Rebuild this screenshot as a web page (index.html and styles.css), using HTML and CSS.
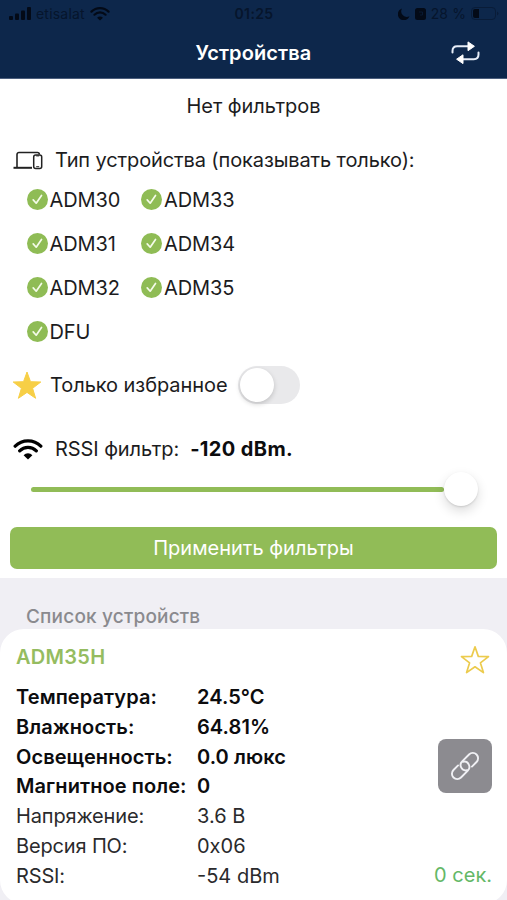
FILE: index.html
```html
<!DOCTYPE html>
<html lang="ru">
<head>
<meta charset="utf-8">
<title>Устройства</title>
<link rel="stylesheet" href="styles.css">
</head>
<body>
<svg class="defs" aria-hidden="true">
  <symbol id="check" viewBox="0 0 21 21"><circle cx="10.500" cy="10.500" r="10.500" fill="#8fbc55"/><path d="M6.200 10.900l3 3.300 5.300-7.800" fill="none" stroke="#f4fbe9" stroke-width="1.700" stroke-linecap="round" stroke-linejoin="round"/></symbol>
  <symbol id="wifi" viewBox="0 0 30 22"><path d="M2.200 8.200a18.200 18.200 0 0 1 25.600 0M6.700 12.800a11.800 11.800 0 0 1 16.600 0" fill="none" stroke="currentColor" stroke-width="3.300" stroke-linecap="round"/><path d="M15 21.500l-4.400-4.300a6.200 6.200 0 0 1 8.800 0z" fill="currentColor"/></symbol>
</svg>
<header class="header">
  <div class="status">
    <div class="carrier">
      <svg width="22" height="13" viewBox="0 0 22 13"><rect y="9" width="4" height="4" rx="1"/><rect x="6" y="6.500" width="4" height="6.500" rx="1"/><rect x="12" y="3.500" width="4" height="9.500" rx="1"/><rect x="18" width="4" height="13" rx="1"/></svg>
      <span class="operator">etisalat</span>
      <svg width="20" height="15"><use href="#wifi"/></svg>
    </div>
    <span class="clock">01:25</span>
    <div class="power">
      <svg width="12" height="12" viewBox="0 0 12 12"><path d="M4 .5A6 6 0 1 0 11.500 8.200 5.600 5.600 0 0 1 4 .5z"/></svg>
      <svg class="lock" width="11" height="12" viewBox="0 0 11 12"><rect width="11" height="12" rx="2.500"/><path d="M4 4h3.500v3H5" fill="none" stroke="#0a1d3a" stroke-width=".8"/></svg>
      <span class="percent">28 %</span>
      <svg width="28" height="13" viewBox="0 0 28 13"><rect x=".5" y=".5" width="24" height="12" rx="3.500" fill="none" stroke="#091c38"/><path d="M4 2h4v9H4a2 2 0 0 1-2-2V4a2 2 0 0 1 2-2z"/><path d="M26 4.500v4q3-2 0-4z" fill="#091c38"/></svg>
    </div>
  </div>
  <div class="navbar">
    <h1 class="title">Устройства</h1>
    <svg class="repeat" width="29" height="24" viewBox="0 0 29 24"><path d="M1.500 11.500V10Q1.500 5.300 6.200 5.300H17M27.500 11.500V13.500Q27.500 18.200 22.800 18.200H12" fill="none" stroke="#e6edf8" stroke-width="2" stroke-linecap="round"/><path d="M17 .9v8.800L23.400 5.300zM12 13.800v8.800L5.600 18.200z" fill="#fff" stroke="#fff" stroke-linejoin="round"/></svg>
  </div>
</header>
<main>
  <section class="filters">
    <p class="summary">Нет фильтров</p>
    <div class="row type-row">
      <svg class="devices" width="30" height="19" viewBox="0 0 30 19"><path d="M4 16V3.500a2 2 0 0 1 2-2H24.500q1.500 0 1.800 1.300" fill="none" stroke="#222" stroke-width="1.600" stroke-linecap="round"/><path d="M.5 16.800h18.500" stroke="#222" stroke-width="2"/><rect x="20.700" y="4" width="8" height="13.600" rx="2" fill="#fff" stroke="#222" stroke-width="1.500"/><path d="M23.200 4.900h3M23.200 15.700h3" stroke="#222"/></svg>
      <span class="t-type">Тип устройства (показывать только):</span>
    </div>
    <div class="types">
      <label class="type"><svg width="21" height="21"><use href="#check"/></svg><span>ADM30</span></label>
      <label class="type"><svg width="21" height="21"><use href="#check"/></svg><span>ADM33</span></label>
      <label class="type"><svg width="21" height="21"><use href="#check"/></svg><span>ADM31</span></label>
      <label class="type"><svg width="21" height="21"><use href="#check"/></svg><span>ADM34</span></label>
      <label class="type"><svg width="21" height="21"><use href="#check"/></svg><span>ADM32</span></label>
      <label class="type"><svg width="21" height="21"><use href="#check"/></svg><span>ADM35</span></label>
      <label class="type"><svg width="21" height="21"><use href="#check"/></svg><span>DFU</span></label>
    </div>
    <div class="row fav-row">
      <svg width="30" height="29" viewBox="0 0 30 29"><path d="M15 1l3.500 9.700 10.300.3-8.200 6.300 3 10L15 21.400 6.400 27.300l3-10L1.200 11l10.300-.3z" fill="#f7cf46" stroke="#f7cf46" stroke-linejoin="round"/></svg>
      <span class="t-fav">Только избранное</span>
      <span class="switch"><span class="knob"></span></span>
    </div>
    <div class="row rssi-row">
      <svg width="30" height="22"><use href="#wifi"/></svg>
      <span class="t-rssi">RSSI фильтр:</span>
      <strong class="t-dbm">-120 dBm.</strong>
    </div>
    <div class="slider"><span class="track"></span><span class="thumb"></span></div>
    <button class="apply">Применить фильтры</button>
  </section>
  <h2 class="list-title">Список устройств</h2>
  <article class="card">
    <div class="card-head">
      <h3 class="name">ADM35H</h3>
      <svg class="star" width="30" height="30" viewBox="0 0 30 30"><path d="M15 1.800l3.300 9.600 10.200.2-8.100 6.200 3 9.800L15 21.800l-8.400 5.800 3-9.800-8.100-6.200 10.200-.2z" fill="none" stroke="#eccb4d" stroke-width="1.700" stroke-linejoin="round"/></svg>
    </div>
    <div class="card-body">
      <dl class="data">
        <dt class="b">Температура:</dt><dd class="b">24.5°C</dd>
        <dt class="b">Влажность:</dt><dd class="b">64.81%</dd>
        <dt class="b">Освещенность:</dt><dd class="b">0.0 люкс</dd>
        <dt class="b">Магнитное поле:</dt><dd class="b">0</dd>
        <dt>Напряжение:</dt><dd>3.6 В</dd>
        <dt>Версия ПО:</dt><dd>0x06</dd>
        <dt>RSSI:</dt><dd>-54 dBm</dd>
      </dl>
      <div class="side">
        <button class="link" aria-label="Подключить"><svg width="30" height="30" viewBox="-15 -15 30 30"><g transform="rotate(-45)" fill="none" stroke="#f0f0f4" stroke-width="1.900" stroke-linecap="round"><path d="M4.500 5.300H11a5.300 5.300 0 0 0 0-10.600H1.300A5.300 5.300 0 0 0-1.500 4.500"/><path d="M-4.500-5.300H-11a5.300 5.300 0 0 0 0 10.600H-1.300A5.300 5.300 0 0 0 1.500-4.500"/></g></svg></button>
        <span class="ago">0 сек.</span>
      </div>
    </div>
  </article>
</main>
</body>
</html>
```
FILE: styles.css
```css
* { box-sizing: border-box; }
body {
  margin: 0;
  height: 900px;
  overflow: hidden;
  background: #f0eff4;
  color: #1c1c1e;
  font: 20px/30px Inter, "Liberation Sans", sans-serif;
}
h1, h2, h3, p, dl, dd { margin: 0; }
svg { display: block; flex: none; }
button { border: 0; padding: 0; font: inherit; }
.defs { display: none; }

.header { height: 79px; background: #0d274b; border-bottom: 1px solid #4c5f7e; }
.status {
  height: 27px;
  padding: 0 8px 0 9px;
  display: grid;
  grid-template-columns: 1fr auto 1fr;
  align-items: center;
  color: #06152c;
  fill: #030a17;
  font-size: 14px;
  line-height: 20px;
}
.carrier, .power { display: flex; align-items: center; gap: 5px; }
.carrier { color: #030a17; }
.operator { color: #06152c; letter-spacing: .2px; }
.clock { font-weight: 600; letter-spacing: .4px; }
.power { justify-content: flex-end; gap: 5px; }
.percent { letter-spacing: .1px; }
.navbar {
  height: 51px;
  padding: 0 27px;
  display: grid;
  grid-template-columns: 29px 1fr 29px;
  align-items: center;
  color: #fff;
}
.title { grid-column: 2; font-size: 20px; font-weight: 600; letter-spacing: .1px; text-align: center; }

.filters { height: 499px; background: #fff; padding: 12px 10px 0; }
.summary { text-align: center; height: 30px; letter-spacing: -.05px; }
.row { display: flex; align-items: center; padding-left: 3px; }
.type-row { margin-top: 24px; height: 30px; gap: 12px; }
.t-type { letter-spacing: -.12px; }
.types {
  display: grid;
  grid-template-columns: 114.500px 115px;
  grid-auto-rows: 44px;
  padding-left: 16.500px;
  margin-top: 2px;
}
.type { display: flex; align-items: center; gap: 2px; }
.type span { padding-top: 1px; letter-spacing: -.1px; }
.fav-row { height: 40px; margin-top: 12px; padding-left: 2px; }
.t-fav { margin-left: 8px; letter-spacing: -.06px; }
.switch {
  width: 62px;
  height: 38px;
  margin-left: 10px;
  padding: 2px;
  border-radius: 19px;
  background: #e9e9eb;
}
.knob {
  display: block;
  width: 34px;
  height: 34px;
  border-radius: 50%;
  background: #fff;
  box-shadow: 0 2px 5px rgba(0, 0, 0, .18);
}
.rssi-row { height: 30px; margin-top: 29px; }
.rssi-row svg { color: #000; }
.t-rssi { margin: 0 11px 0 12px; letter-spacing: -.08px; }
.t-dbm { color: #0c0c0e; letter-spacing: .38px; }
.slider { display: flex; align-items: center; height: 34px; margin: 8px 19px 0 21px; }
.track { flex: 1; height: 5px; border-radius: 3px; background: #91bc57; }
.thumb {
  width: 34px;
  height: 34px;
  border-radius: 50%;
  background: #fff;
  box-shadow: 0 1px 2px rgba(0, 0, 0, .12), 0 5px 12px rgba(0, 0, 0, .14);
}
.apply {
  display: block;
  width: 100%;
  height: 42px;
  margin-top: 21px;
  border-radius: 7px;
  background: #91bc57;
  color: #fff;
}

.list-title {
  height: 51px;
  padding: 24px 26px 0;
  color: #8a8a8e;
  font-size: 19px;
  font-weight: 500;
  letter-spacing: .18px;
}
.card { height: 275px; border-radius: 24px; background: #fff; padding: 13px 15px 0 16px; }
.card-head { display: flex; justify-content: space-between; height: 40px; padding-right: 2px; }
.star { margin-top: 3px; }
.name { color: #95bc60; font-size: 20px; font-weight: 600; letter-spacing: .3px; }
.card-body { display: flex; justify-content: space-between; }
.data {
  display: grid;
  grid-template-columns: 181px auto;
  grid-auto-rows: 29.8px;
  color: #2a2a2c;
}
.data dt { letter-spacing: -.15px; }
.data .b { color: #0c0c0e; font-weight: 600; letter-spacing: .08px; }
.side { display: flex; flex-direction: column; align-items: flex-end; padding-top: 57px; }
.link {
  display: grid;
  place-items: center;
  width: 54px;
  height: 54px;
  border-radius: 8px;
  background: #8c8b90;
}
.ago { margin-top: 67px; color: #64b867; }
```
